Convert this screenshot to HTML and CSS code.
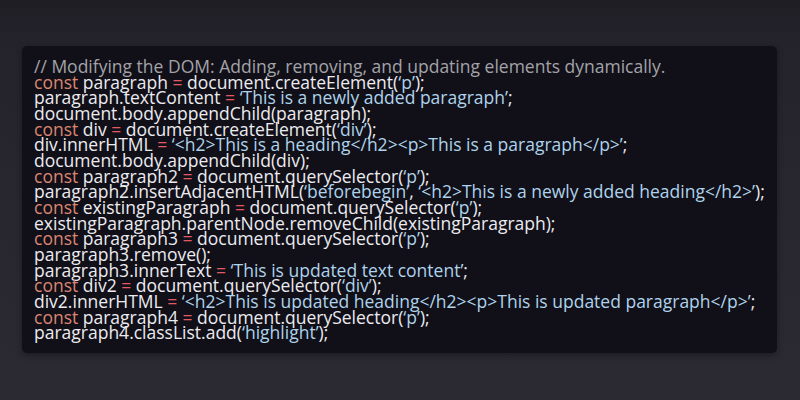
FILE: index.html
```html
<!DOCTYPE html>
<html>
<head>
<meta charset="utf-8">
<link rel="stylesheet" href="styles.css">
</head>
<body>
<div class="page">
<pre class="code"><span class="c">// Modifying the DOM: Adding, removing, and updating elements dynamically.</span>
<span class="k">const</span> paragraph <span class="o">=</span> document.createElement(<span class="s">‘p’</span>);
paragraph.textContent <span class="o">=</span> <span class="s">‘This is a newly added paragraph’</span>;
document.body.appendChild(paragraph);
<span class="k">const</span> div <span class="o">=</span> document.createElement(<span class="s">‘div’</span>);
div.innerHTML <span class="o">=</span> <span class="s">‘&lt;h2&gt;This is a heading&lt;/h2&gt;&lt;p&gt;This is a paragraph&lt;/p&gt;’</span>;
document.body.appendChild(div);
<span class="k">const</span> paragraph2 <span class="o">=</span> document.querySelector(<span class="s">‘p’</span>);
paragraph2.insertAdjacentHTML(<span class="s">‘beforebegin’</span>, <span class="s">‘&lt;h2&gt;This is a newly added heading&lt;/h2&gt;’</span>);
<span class="k">const</span> existingParagraph <span class="o">=</span> document.querySelector(<span class="s">‘p’</span>);
existingParagraph.parentNode.removeChild(existingParagraph);
<span class="k">const</span> paragraph3 <span class="o">=</span> document.querySelector(<span class="s">‘p’</span>);
paragraph3.remove();
paragraph3.innerText <span class="o">=</span> <span class="s">‘This is updated text content’</span>;
<span class="k">const</span> div2 <span class="o">=</span> document.querySelector(<span class="s">‘div’</span>);
div2.innerHTML <span class="o">=</span> <span class="s">‘&lt;h2&gt;This is updated heading&lt;/h2&gt;&lt;p&gt;This is updated paragraph&lt;/p&gt;’</span>;
<span class="k">const</span> paragraph4 <span class="o">=</span> document.querySelector(<span class="s">‘p’</span>);
paragraph4.classList.add(<span class="s">‘highlight’</span>);</pre>
</div>
</body>
</html>
```

FILE: styles.css
```css
html, body {
  margin: 0;
  padding: 0;
}
body {
  width: 800px;
  height: 400px;
  overflow: hidden;
  background: linear-gradient(180deg, #1f1e25 0px, #24232b 40px, #28272f 200px, #2b2a33 400px);
}
.page {
  padding: 46px 23px 0 22px;
}
.code {
  margin: 0;
  height: 307px;
  box-sizing: border-box;
  padding: 13px 12px 0 12px;
  background: #111018;
  border-radius: 5px;
  box-shadow: 0 2px 6px rgba(0,0,0,0.35);
  font-family: "Open Sans", sans-serif;
  font-size: 17.5px;
  line-height: 15.65px;
  color: #ecebf0;
  white-space: pre;
}
.c { color: #a3a3a8; }
.k { color: #dc8672; }
.o { color: #e25a66; }
.s { color: #aed3ec; }
```
